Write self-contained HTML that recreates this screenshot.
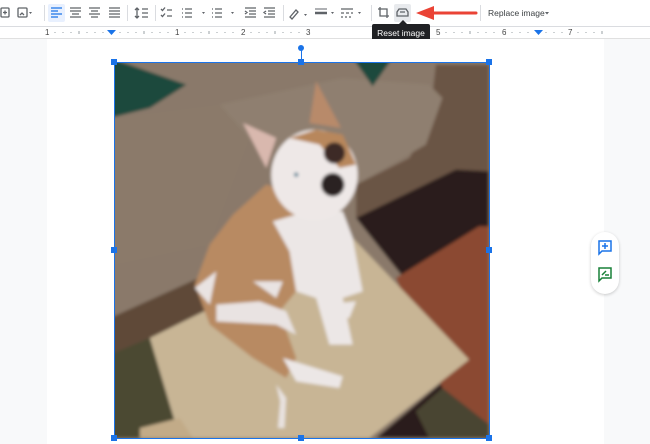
<!DOCTYPE html>
<html><head><style>
body{margin:0;width:650px;height:444px;overflow:hidden;background:#f8f9fa;font-family:"Liberation Sans",sans-serif;position:relative}
.a{position:absolute}
.tb{left:0;top:0;width:650px;height:26px;background:#fff;border-bottom:1px solid #dadce0}
.sep{position:absolute;top:5px;width:1px;height:16px;background:#dadce0}
.ruler{left:0;top:27px;width:650px;height:11px;background:#fff;border-bottom:1px solid #e0e0e0}
.num{position:absolute;top:28px;font-size:8px;color:#444}
.h{position:absolute;width:6px;height:6px;background:#1a73e8}
</style></head><body>
<div class="a tb"></div>
<svg class="a" style="left:0;top:0" width="650" height="26">
<g fill="none" stroke="#5f6368" stroke-width="1.3">
<rect x="1" y="8" width="8" height="9" rx="1"/><path d="M3 12.5h4M5 10.5v4"/>
<rect x="18" y="8" width="9" height="9" rx="1"/><path d="M20 15l2-2 2 2"/>
<path d="M70 8h11M70 11h11M72 14h7M70 17h11M89 8h11M91 11h7M89 14h11M91 17h7M109 8h11M109 11h11M109 14h11M109 17h11"/>
<path d="M137 8v10M135 10l2-2 2 2M135 16l2 2 2-2M142 9h6M142 13h6M142 17h6"/>
<path d="M161 9l1.5 1.5 2.5-3M161 15l1.5 1.5 2.5-3M167 10h5M167 16h5"/>
<path d="M182 9h1M182 13h1M182 17h1M185 9h7M185 13h7M185 17h7"/>
<path d="M212 9h1M212 13h1M212 17h1M215 9h7M215 13h7M215 17h7"/>
<path d="M245 8h11M249 11h7M249 14h7M245 17h11M245 11l2 1.5-2 1.5M264 8h11M268 11h7M268 14h7M264 17h11M266 11l-2 1.5 2 1.5"/>
<path d="M290 17l6-7 2 2-6 7z"/>
<path d="M315 9h12" stroke-width="1"/><path d="M315 13h12" stroke-width="2.5"/>
<path d="M341 9h12M341 13h3M346 13h3M351 13h2M341 17h2M345 17h2M349 17h2"/>
<path d="M380 7v9h9M378 9h9v9"/>
</g>
<g fill="#5f6368"><path d="M202 12l3 0-1.5 2z"/><path d="M231 12l3 0-1.5 2z"/><path d="M304 14l3 0-1.5 2z"/><path d="M331 12l3 0-1.5 2z"/><path d="M358 12l3 0-1.5 2z"/><path d="M29 12l3 0-1.5 2z"/><path d="M545 12l4 0-2 2.5z"/></g>
<rect x="48" y="4" width="17" height="18" rx="2" fill="#e8f0fe"/>
<path d="M51 8h11M51 11h7M51 14h11M51 17h7" stroke="#1a73e8" stroke-width="1.3"/>
<rect x="394" y="4" width="17" height="18" rx="2" fill="#e8eaed"/>
<path d="M397 16h11v-4l-2-3h-7l-2 3z M400 12h5" fill="none" stroke="#5f6368" stroke-width="1.3"/>
<path d="M476 13H428" stroke="#ea4335" stroke-width="3" stroke-linecap="round"/>
<path d="M416 13l18-7v14z" fill="#ea4335"/>
</svg>
<div class="sep" style="left:44px"></div><div class="sep" style="left:127px"></div><div class="sep" style="left:155px"></div><div class="sep" style="left:283px"></div><div class="sep" style="left:371px"></div><div class="sep" style="left:480px"></div>
<div class="a" style="left:488px;top:8px;font-size:8.5px;color:#3c4043">Replace image</div>
<div class="a ruler"></div>
<svg class="a" style="left:0;top:27px" width="650" height="11">
<g stroke="#9aa0a6" stroke-width="1">
<path d="M55 5v1M63 5v1M71 5v1M79 4v3M87 5v1M95 5v1M103 5v1M120 5v1M128 5v1M136 5v1M144 4v3M152 5v1M160 5v1M168 5v1M185 5v1M193 5v1M201 5v1M209 4v3M217 5v1M225 5v1M233 5v1M251 5v1M259 5v1M267 5v1M275 4v3M283 5v1M291 5v1M299 5v1M446 5v1M454 5v1M462 5v1M470 4v3M478 5v1M486 5v1M494 5v1M512 5v1M520 5v1M528 5v1M546 5v1M554 5v1M562 5v1M578 5v1M586 5v1M594 5v1M602 4v3"/>
</g>
<path d="M107 3h9l-4.5 5z" fill="#1a73e8"/><path d="M534 3h9l-4.5 5z" fill="#1a73e8"/>
</svg>
<div class="num" style="left:45px">1</div><div class="num" style="left:175px">1</div><div class="num" style="left:241px">2</div><div class="num" style="left:306px">3</div><div class="num" style="left:436px">5</div><div class="num" style="left:502px">6</div><div class="num" style="left:568px">7</div>
<div class="a" style="left:372px;top:24px;width:58px;height:19px;background:#202124;border-radius:2px;color:#fff;font-size:8.5px;line-height:19px;text-align:center">Reset image</div>
<div class="a" style="left:399px;top:20px;width:0;height:0;border:4px solid transparent;border-bottom-color:#202124;border-top:0"></div>
<div class="a" style="left:47px;top:39px;width:557px;height:405px;background:#fff"></div>
<div class="a" style="left:301px;top:45px;width:6px;height:6px;border-radius:50%;background:#1a73e8;margin-left:-3px"></div>
<div class="a" style="left:301px;top:50px;width:1px;height:12px;background:#1a73e8"></div>
<svg class="a" style="left:114px;top:62px" width="375" height="376" viewBox="12 12 1128 1128" preserveAspectRatio="none">
<defs><filter id="b" x="-5%" y="-5%" width="110%" height="110%"><feGaussianBlur stdDeviation="5"/></filter><clipPath id="c"><rect x="12" y="12" width="1128" height="1128"/></clipPath></defs>
<g clip-path="url(#c)"><g filter="url(#b)">
<rect x="0" y="0" width="1200" height="1200" fill="#8a796a"/>
<path d="M980 20L1140 20 1140 500 1040 335 740 480 740 380 900 300 960 200z" fill="#6a5444"/>
<path d="M0 780L400 600 300 830 120 860 0 890z" fill="#5e4939"/>
<path d="M330 140L700 60 960 80 1000 120 950 260 740 380 600 320 420 240z" fill="#8f7f70"/>
<path d="M15 180L330 140 420 240 300 560 15 620z" fill="#8b7a6a"/>
<path d="M740 480L1040 335 1140 340 1140 1140 800 1140 1080 905z" fill="#2a1f1b"/>
<path d="M860 660L1110 505 1140 505 1140 1100 1000 990z" fill="#8b4a30"/>
<path d="M920 1060L1000 990 1140 1100 1140 1140 960 1140z" fill="#4a4532"/>
<path d="M0 890L120 840 210 1140 0 1140z" fill="#4c4a33"/>
<path d="M120 840L730 540 1080 905 780 1140 210 1140z" fill="#c8b595"/>
<path d="M90 1110L210 1080 250 1140 90 1140z" fill="#c2ab88"/>
<path d="M0 0L230 80 120 150 0 180z" fill="#1f4a3e"/>
<path d="M730 0L850 0 790 85z" fill="#1f4a3e"/>
<path d="M255 680L300 560 370 470 470 380 540 400 570 480 560 700 510 760 560 900 530 960 430 900 300 800z" fill="#b88a62"/>
<path d="M490 490L560 470 700 460 730 540 760 700 700 720 730 860 660 860 620 720 560 700 540 580z" fill="#ece7e6"/>
<path d="M255 690L320 640 300 740z M320 740L450 730 530 760 560 830 500 800 320 790z M430 670L520 670 500 720z" fill="#e9e3e2"/>
<path d="M520 900L700 955 690 990 560 970z M640 740L740 730 720 780 650 780z" fill="#ece7e6"/>
<path d="M500 980L530 1020 525 1110 505 1110 512 1030z" fill="#e8e2df"/>
<ellipse cx="615" cy="350" rx="130" ry="135" fill="#eee8e7"/>
<path d="M540 240L620 215 700 230 740 320 690 330 630 260z" fill="#b8875c"/>
<path d="M400 195L500 240 470 330z" fill="#d9b8ae"/>
<path d="M620 70L695 210 600 195z" fill="#b88a6a"/>
<circle cx="675" cy="285" r="32" fill="#3c2c28"/>
<circle cx="670" cy="380" r="35" fill="#2a2424"/>
<circle cx="560" cy="350" r="7" fill="#7090a0"/>
</g></g>
</svg>
<div class="a" style="left:114px;top:62px;width:374px;height:375px;border:1px solid #1a73e8"></div>
<div class="h" style="left:111px;top:59px"></div><div class="h" style="left:298px;top:59px"></div><div class="h" style="left:486px;top:59px"></div>
<div class="h" style="left:111px;top:247px"></div><div class="h" style="left:486px;top:247px"></div>
<div class="h" style="left:111px;top:435px"></div><div class="h" style="left:298px;top:435px"></div><div class="h" style="left:486px;top:435px"></div>
<div class="a" style="left:591px;top:232px;width:28px;height:62px;border-radius:14px;background:#fff;box-shadow:0 1px 3px rgba(0,0,0,.2)"></div>
<svg class="a" style="left:597px;top:239px" width="16" height="48">
<path d="M2 2h12v10H5l-3 3z" fill="none" stroke="#1a73e8" stroke-width="1.5"/><path d="M8 4v6M5 7h6" stroke="#1a73e8" stroke-width="1.5"/>
<path d="M2 29h12v10H5l-3 3z" fill="none" stroke="#188038" stroke-width="1.5"/><path d="M5 36l4-4M8 36h4" stroke="#188038" stroke-width="1.5"/>
</svg>
</body></html>
